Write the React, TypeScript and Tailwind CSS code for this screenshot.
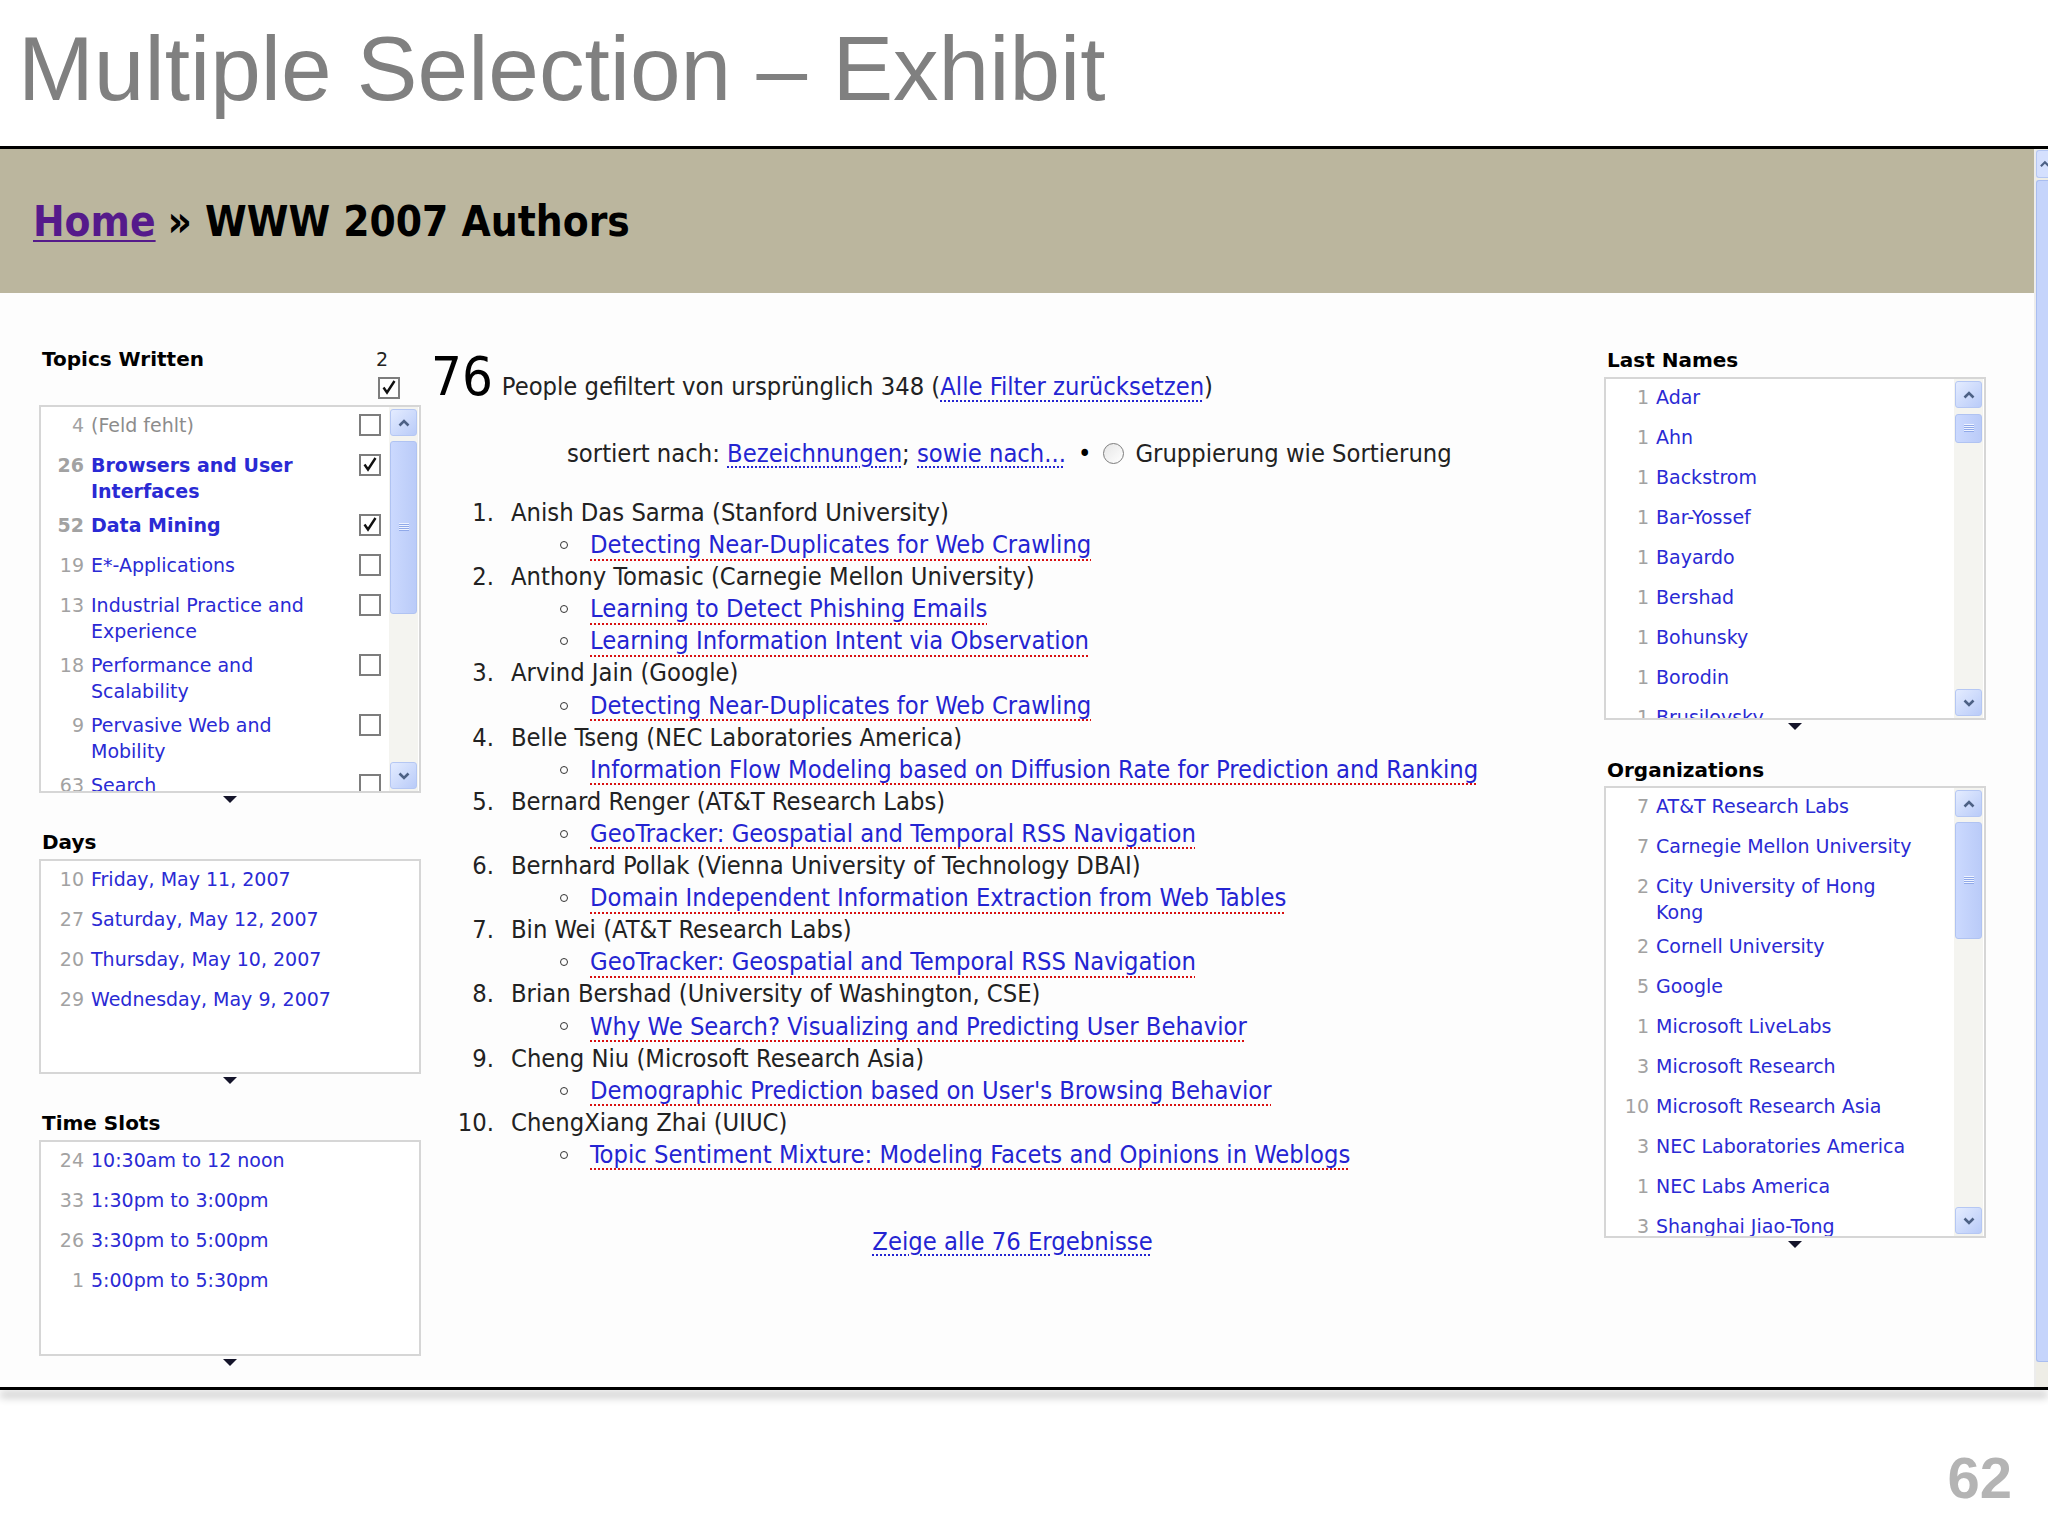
import React from 'react';

const facetFont = "font-['DejaVu_Sans','Verdana',sans-serif]";
const narrowFont =
  "font-['DejaVu_Sans_Condensed','Liberation_Sans_Narrow','DejaVu_Sans',sans-serif] font-stretch-condensed";

function Chevron({ up }: { up?: boolean }) {
  return (
    <svg width="12" height="8" viewBox="0 0 12 8">
      <path
        d={up ? 'M1.5 6.5 L6 2 L10.5 6.5' : 'M1.5 1.5 L6 6 L10.5 1.5'}
        fill="none"
        stroke="#4d6185"
        strokeWidth="2.6"
      />
    </svg>
  );
}

function ScrollButton({ up }: { up?: boolean }) {
  return (
    <div className="flex h-[27px] w-[27px] flex-none items-center justify-center rounded-[3px] border border-[#b5c7f3] bg-linear-to-br from-[#e4ecff] to-[#b9cbf8]">
      <Chevron up={up} />
    </div>
  );
}

function Grip() {
  return (
    <svg width="10" height="9" viewBox="0 0 10 9">
      {[0.5, 2.5, 4.5, 6.5].map((y) => (
        <line key={y} x1="0" x2="10" y1={y} y2={y} stroke="#eef3ff" />
      ))}
      {[1.5, 3.5, 5.5, 7.5].map((y) => (
        <line key={y} x1="0" x2="10" y1={y} y2={y} stroke="#90a9e9" />
      ))}
    </svg>
  );
}

function Scrollbar({ gap, thumb }: { gap: string; thumb: string }) {
  return (
    <div className="mr-[1px] flex w-[29px] flex-none flex-col items-center bg-[#f4f4f0] py-[2px]">
      <ScrollButton up />
      <div className={`${gap} flex-none`} />
      <div
        className={`${thumb} flex w-[27px] flex-none items-center justify-center rounded-[3px] border border-[#b0c3f2] bg-linear-to-r from-[#cbd9fe] to-[#bacbf8]`}
      >
        <Grip />
      </div>
      <div className="flex-1" />
      <ScrollButton />
    </div>
  );
}

function Checkbox({ checked, className = '' }: { checked?: boolean; className?: string }) {
  return (
    <svg width="22" height="22" viewBox="0 0 22 22" className={`flex-none ${className}`}>
      <rect x="1" y="1" width="20" height="20" fill="#fff" stroke="#7d7d7d" strokeWidth="2" />
      {checked && (
        <path d="M5.5 10.5 L9 15.5 L16.5 4" fill="none" stroke="#111" strokeWidth="2.4" />
      )}
    </svg>
  );
}

function Triangle() {
  return (
    <div className="flex h-[12px] justify-center pt-[3px]">
      <svg width="14" height="7" viewBox="0 0 14 7">
        <path d="M0 0 H14 L7 7 Z" fill="#14142a" />
      </svg>
    </div>
  );
}

type Row = { count: string; label: string; bold?: boolean; checked?: boolean; muted?: boolean };

function FacetRow({ row, labelW, check }: { row: Row; labelW: string; check?: boolean }) {
  return (
    <div className="flex min-h-[40px] items-start pt-[5px] pb-[3px] leading-[26px]">
      <span
        className={`w-[43px] flex-none text-right text-[#a2a2a2] ${row.bold ? 'font-bold' : ''}`}
      >
        {row.count}
      </span>
      <span
        className={`ml-[7px] ${labelW} flex-none ${row.muted ? 'text-[#8c8c8c]' : 'text-[#2a2ad4]'} ${row.bold ? 'font-bold' : ''}`}
      >
        {row.label}
      </span>
      {check && <Checkbox checked={row.checked} className="mt-[2px] mr-[8px] ml-auto" />}
    </div>
  );
}

const topics: Row[] = [
  { count: '4', label: '(Feld fehlt)', muted: true },
  { count: '26', label: 'Browsers and User Interfaces', bold: true, checked: true },
  { count: '52', label: 'Data Mining', bold: true, checked: true },
  { count: '19', label: 'E*-Applications' },
  { count: '13', label: 'Industrial Practice and Experience' },
  { count: '18', label: 'Performance and Scalability' },
  { count: '9', label: 'Pervasive Web and Mobility' },
  { count: '63', label: 'Search' },
];

const days: Row[] = [
  { count: '10', label: 'Friday, May 11, 2007' },
  { count: '27', label: 'Saturday, May 12, 2007' },
  { count: '20', label: 'Thursday, May 10, 2007' },
  { count: '29', label: 'Wednesday, May 9, 2007' },
];

const slots: Row[] = [
  { count: '24', label: '10:30am to 12 noon' },
  { count: '33', label: '1:30pm to 3:00pm' },
  { count: '26', label: '3:30pm to 5:00pm' },
  { count: '1', label: '5:00pm to 5:30pm' },
];

const lastNames: Row[] = [
  'Adar',
  'Ahn',
  'Backstrom',
  'Bar-Yossef',
  'Bayardo',
  'Bershad',
  'Bohunsky',
  'Borodin',
  'Brusilovsky',
].map((label) => ({ count: '1', label }));

const orgs: Row[] = [
  { count: '7', label: 'AT&T Research Labs' },
  { count: '7', label: 'Carnegie Mellon University' },
  { count: '2', label: 'City University of Hong Kong' },
  { count: '2', label: 'Cornell University' },
  { count: '5', label: 'Google' },
  { count: '1', label: 'Microsoft LiveLabs' },
  { count: '3', label: 'Microsoft Research' },
  { count: '10', label: 'Microsoft Research Asia' },
  { count: '3', label: 'NEC Laboratories America' },
  { count: '1', label: 'NEC Labs America' },
  { count: '3', label: 'Shanghai Jiao-Tong' },
];

const people: { name: string; papers: string[] }[] = [
  { name: 'Anish Das Sarma (Stanford University)', papers: ['Detecting Near-Duplicates for Web Crawling'] },
  {
    name: 'Anthony Tomasic (Carnegie Mellon University)',
    papers: ['Learning to Detect Phishing Emails', 'Learning Information Intent via Observation'],
  },
  { name: 'Arvind Jain (Google)', papers: ['Detecting Near-Duplicates for Web Crawling'] },
  {
    name: 'Belle Tseng (NEC Laboratories America)',
    papers: ['Information Flow Modeling based on Diffusion Rate for Prediction and Ranking'],
  },
  { name: 'Bernard Renger (AT&T Research Labs)', papers: ['GeoTracker: Geospatial and Temporal RSS Navigation'] },
  {
    name: 'Bernhard Pollak (Vienna University of Technology DBAI)',
    papers: ['Domain Independent Information Extraction from Web Tables'],
  },
  { name: 'Bin Wei (AT&T Research Labs)', papers: ['GeoTracker: Geospatial and Temporal RSS Navigation'] },
  {
    name: 'Brian Bershad (University of Washington, CSE)',
    papers: ['Why We Search? Visualizing and Predicting User Behavior'],
  },
  {
    name: 'Cheng Niu (Microsoft Research Asia)',
    papers: ["Demographic Prediction based on User's Browsing Behavior"],
  },
  {
    name: 'ChengXiang Zhai (UIUC)',
    papers: ['Topic Sentiment Mixture: Modeling Facets and Opinions in Weblogs'],
  },
];

const blueLink =
  'text-[#2424d2] underline decoration-dotted decoration-[#2424d2] decoration-[1.5px] underline-offset-[5px]';
const redLink =
  'text-[#2424d2] underline decoration-dotted decoration-[#d81010] decoration-[1.5px] underline-offset-[6px]';

function FacetLabel({ children }: { children: React.ReactNode }) {
  return <div className="pl-[3px] text-[20px] leading-[22px] font-bold text-black">{children}</div>;
}

export default function App() {
  return (
    <div className="relative h-[1536px] w-[2048px] overflow-hidden bg-white">
      {/* slide title */}
      <div className="h-[146px] pt-[23px] pl-[18px] font-['Liberation_Sans',Arial,sans-serif] text-[91px] leading-none text-[#808080]">
        Multiple Selection – Exhibit
      </div>
      <div className="h-[3px] bg-black" />

      {/* browser screenshot */}
      <div className="flex h-[1238px]">
        <div className="flex min-w-0 flex-1 flex-col bg-[#fdfdfd]">
          <div
            className={`flex h-[144px] flex-none items-center bg-[#bbb69e] pl-[33px] text-[42px] font-bold text-black ${narrowFont}`}
          >
            <span className="text-[#551a8b] underline decoration-2 underline-offset-[4px]">Home</span>
            <span className="ml-[12px]">»</span>
            <span className="ml-[13px]">WWW 2007 Authors</span>
          </div>

          <div className={`flex flex-1 pl-[39px] text-[19px] ${facetFont}`}>
            {/* left facets */}
            <div className="flex w-[382px] flex-none flex-col pt-[55px]">
              <div className="flex items-start justify-between">
                <FacetLabel>Topics Written</FacetLabel>
                <div className="mr-[19px] flex flex-col items-center">
                  <span className="mr-[14px] leading-[22px] text-[#222]">2</span>
                  <Checkbox checked className="mt-[7px]" />
                </div>
              </div>
              <div className="mt-[6px] flex h-[388px] border-2 border-[#d6d6d6] bg-white">
                <div className="min-w-0 flex-1 overflow-hidden">
                  {topics.map((r) => (
                    <FacetRow key={r.label} row={r} labelW="w-[240px]" check />
                  ))}
                </div>
                <Scrollbar gap="h-[5px]" thumb="h-[173px]" />
              </div>
              <Triangle />

              <div className="mt-[26px]">
                <FacetLabel>Days</FacetLabel>
              </div>
              <div className="mt-[6px] h-[215px] border-2 border-[#d6d6d6] bg-white">
                {days.map((r) => (
                  <FacetRow key={r.label} row={r} labelW="w-[290px]" />
                ))}
              </div>
              <Triangle />

              <div className="mt-[26px]">
                <FacetLabel>Time Slots</FacetLabel>
              </div>
              <div className="mt-[6px] h-[216px] border-2 border-[#d6d6d6] bg-white">
                {slots.map((r) => (
                  <FacetRow key={r.label} row={r} labelW="w-[290px]" />
                ))}
              </div>
              <Triangle />
            </div>

            {/* results */}
            <div className={`ml-[10px] flex w-[1163px] flex-none flex-col pt-[57px] text-[25.3px] text-[#222] ${narrowFont}`}>
              <div className="flex items-baseline">
                <span className="text-[54px] leading-none text-black">76</span>
                <span className="ml-[9px]">
                  People gefiltert von ursprünglich 348 (<span className={blueLink}>Alle Filter zurücksetzen</span>)
                </span>
              </div>

              <div className="mt-[32px] flex h-[32px] items-center pl-[136px]">
                <span>sortiert nach:&nbsp;</span>
                <span className={blueLink}>Bezeichnungen</span>
                <span>;&nbsp;</span>
                <span className={blueLink}>sowie nach...</span>
                <span className="ml-[12px] text-black">•</span>
                <span className="ml-[12px] h-[21px] w-[21px] flex-none rounded-full border-[1.5px] border-[#7c7c7c] bg-linear-to-br from-[#e6e6e6] to-white" />
                <span className="ml-[11px]">Gruppierung wie Sortierung</span>
              </div>

              <div className="mt-[27px]">
                {people.map((p, i) => (
                  <div key={p.name}>
                    <div className="flex h-[32.1px] items-center">
                      <span className="w-[63px] flex-none text-right">{i + 1}.</span>
                      <span className="ml-[17px]">{p.name}</span>
                    </div>
                    {p.papers.map((paper) => (
                      <div key={paper} className="flex h-[32.1px] items-center pl-[129px]">
                        <span className="h-[8px] w-[8px] flex-none rounded-full border-[1.5px] border-[#333]" />
                        <span className={`ml-[22px] ${redLink}`}>{paper}</span>
                      </div>
                    ))}
                  </div>
                ))}
              </div>

              <div className="mt-[52px] text-center">
                <span className={blueLink}>Zeige alle 76 Ergebnisse</span>
              </div>
            </div>

            {/* right facets */}
            <div className="ml-[10px] flex w-[382px] flex-none flex-col pt-[56px]">
              <FacetLabel>Last Names</FacetLabel>
              <div className="mt-[6px] flex h-[343px] border-2 border-[#d6d6d6] bg-white">
                <div className="min-w-0 flex-1 overflow-hidden">
                  {lastNames.map((r) => (
                    <FacetRow key={r.label} row={r} labelW="w-[265px]" />
                  ))}
                </div>
                <Scrollbar gap="h-[6px]" thumb="h-[29px]" />
              </div>
              <Triangle />

              <div className="mt-[27px]">
                <FacetLabel>Organizations</FacetLabel>
              </div>
              <div className="mt-[5px] flex h-[452px] border-2 border-[#d6d6d6] bg-white">
                <div className="min-w-0 flex-1 overflow-hidden">
                  {orgs.map((r) => (
                    <FacetRow key={r.label} row={r} labelW="w-[265px]" />
                  ))}
                </div>
                <Scrollbar gap="h-[5px]" thumb="h-[117px]" />
              </div>
              <Triangle />
            </div>
          </div>
        </div>

        {/* page scrollbar, cut at the slide edge */}
        <div className="w-[2px] flex-none bg-[#ececec]" />
        <div className="flex w-[12px] flex-none flex-col bg-[#eeede6] pt-[1px]">
          <div className="flex h-[28px] flex-none items-center rounded-l-[3px] border border-r-0 border-[#b5c7f3] bg-[#d5e0fe] pl-[3px]">
            <svg width="9" height="8" viewBox="0 0 9 8">
              <path d="M1 6.5 L5.5 2 L10 6.5" fill="none" stroke="#4d6185" strokeWidth="2.4" />
            </svg>
          </div>
          <div className="mt-[2px] h-[1182px] flex-none rounded-l-[3px] border border-r-0 border-[#a9bdf0] bg-[#c5d4fb]" />
        </div>
      </div>

      <div className="h-[3px] bg-black shadow-[0_6px_9px_rgba(0,0,0,0.45)]" />

      <div className="flex justify-end pt-[59px] pr-[36px] font-['Liberation_Sans',Arial,sans-serif] text-[58px] leading-none font-bold text-[#b4b4b4]">
        62
      </div>
    </div>
  );
}
